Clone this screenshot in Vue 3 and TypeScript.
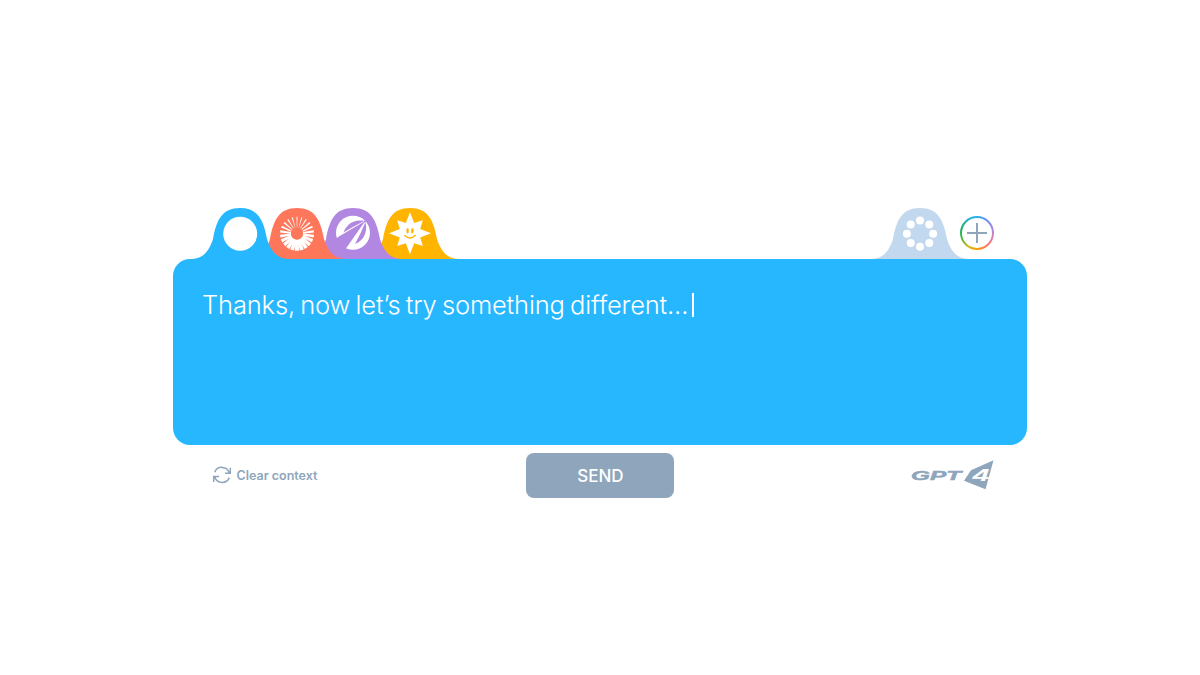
<script setup lang="ts">
interface Tab {
  name: string
  color: string
}

const tabs: Tab[] = [
  { name: 'blank', color: '#26b7ff' },
  { name: 'burst', color: '#ff775b' },
  { name: 'blades', color: '#b287e2' },
  { name: 'sunny', color: '#ffb400' },
]

const tabShape = 'M4 51C15 50.500 21 43.500 25 31C28.500 12 34 0 52 0S75.500 12 79 31C83 43.500 89 50.500 100 51Z'

const rays = Array.from({ length: 22 }, (_, i) => {
  const angle = (i * 360) / 22
  const low = (1 - Math.cos((angle * Math.PI) / 180)) / 2
  const outer = 0.5 + low * 1.5
  const inner = 0.15 + low * 1.5
  return { angle, points: `${17 - outer},0 ${17 + outer},0 ${17 + inner},11 ${17 - inner},11` }
})

const dots = Array.from({ length: 8 }, (_, i) => {
  const a = (i * Math.PI) / 4
  return { x: 17 + 13.1 * Math.cos(a), y: 17 + 13.1 * Math.sin(a) }
})

const star = Array.from({ length: 16 }, (_, i) => {
  const a = (i * Math.PI) / 8
  const r = i % 2 ? 11 : i % 4 === 0 ? 21 : 18.2
  return `${(21 + r * Math.sin(a)).toFixed(2)},${(21 - r * Math.cos(a)).toFixed(2)}`
}).join(' ')
</script>

<template>
  <main class="page">
    <section class="composer">
      <header class="tabs">
        <div class="group">
          <button v-for="tab in tabs" :key="tab.name" class="tab" :class="tab.name" :aria-label="tab.name">
            <svg width="104" height="52" viewBox="0 0 104 52">
              <path :d="tabShape" :fill="tab.color" />
              <circle v-if="tab.name === 'blank'" cx="52.200" cy="25.700" r="17" fill="#fff" />
              <g v-else-if="tab.name === 'burst'" transform="translate(35 8.700)">
                <polygon
                  v-for="ray in rays"
                  :key="ray.angle"
                  :points="ray.points"
                  :transform="`rotate(${ray.angle} 17 17)`"
                  fill="#fff"
                />
                <path d="M9.500 19A7.800 7.800 0 0 0 24.500 19L24 25Q17 32 10 25Z" fill="#fff" />
                <circle cx="17" cy="16.600" r="6" :fill="tab.color" />
              </g>
              <g v-else-if="tab.name === 'blades'" transform="translate(35 7.800)">
                <circle cx="17" cy="17" r="17" fill="#fff" />
                <path d="M29.200 5.200L2.500 21L-2 25L8 36L10.300 32.200Z" :fill="tab.color" />
                <path d="M28.500 5Q18 3.500 12.300 9.200Q8.500 13 7.500 16.800Q17 11 28.500 5Z" :fill="tab.color" />
                <path d="M29.400 6.200Q31.600 14 27.500 21.500Q24.500 26.300 19 28.200Q25 17.500 29.400 6.200Z" :fill="tab.color" />
                <path d="M28 6.400L31 3.400" :stroke="tab.color" stroke-width="1.300" />
              </g>
              <g v-else transform="translate(31 4.200)">
                <polygon :points="star" fill="#fff" />
                <ellipse cx="18.600" cy="18.600" rx="1.250" ry="2.700" :fill="tab.color" />
                <ellipse cx="23.400" cy="18.600" rx="1.250" ry="2.700" :fill="tab.color" />
                <path d="M15.800 23.200Q21 28.200 26.200 23.200" fill="none" :stroke="tab.color" stroke-width="1.400" stroke-linecap="round" />
              </g>
            </svg>
          </button>
        </div>
        <div class="group actions">
          <button class="tab" aria-label="circle">
            <svg width="104" height="52" viewBox="0 0 104 52">
              <path :d="tabShape" fill="#c2d8ee" />
              <g transform="translate(35 8.700)">
                <circle v-for="(dot, i) in dots" :key="i" :cx="dot.x" :cy="dot.y" r="4" fill="#fff" />
              </g>
            </svg>
          </button>
          <button class="add" aria-label="Add">
            <svg width="34" height="34" viewBox="0 0 34 34">
              <path d="M17 7V27M7 17H27" stroke="#8ea5bb" stroke-width="2" />
            </svg>
          </button>
        </div>
      </header>

      <div class="panel">
        <p class="message">Thanks, now let’s try something different...<span class="caret"></span></p>
      </div>

      <footer class="footer">
        <button class="clear">
          <svg width="20" height="18" viewBox="0 0 20 18" fill="none" stroke="#8ea5bb" stroke-width="1.500">
            <path d="M2.700 6.200A7.700 7.700 0 0 1 17.200 6.800M18.300 1.800V7.200H12.900" />
            <path d="M17.300 11.600A7.700 7.700 0 0 1 2.800 11M1.700 16V10.600H7.100" />
          </svg>
          <span>Clear context</span>
        </button>
        <button class="send">SEND</button>
        <svg class="model" width="84" height="32" viewBox="0 0 84 32" aria-label="GPT4">
          <text class="mark" x="1" y="21" textLength="50" lengthAdjust="spacingAndGlyphs">GPT</text>
          <path d="M83.500 1.300L75.500 30.300L54 21.800L61 11.300Z" fill="#8ea5bb" />
          <text class="four" x="62.500" y="21.800" textLength="17" lengthAdjust="spacingAndGlyphs">4</text>
        </svg>
      </footer>
    </section>
  </main>
</template>

<style>
body {
  margin: 0;
  background: #fff;
}
</style>

<style scoped>
.page {
  box-sizing: border-box;
  width: 1200px;
  height: 675px;
  padding: 208px 173px 0;
  background: #fff;
  font-family: Inter, 'Liberation Sans', sans-serif;
}
button {
  padding: 0;
  border: 0;
  background: none;
  font: inherit;
}
.tabs {
  display: flex;
  justify-content: space-between;
  height: 50.700px;
  padding: 0 33.500px 0 15.300px;
}
.group {
  display: flex;
  isolation: isolate;
}
.tab {
  display: block;
  width: 104px;
  height: 52px;
  margin-right: -47.600px;
}
.tab svg {
  display: block;
}
.blank {
  position: relative;
  z-index: 4;
}
.burst {
  position: relative;
  z-index: 3;
}
.blades {
  position: relative;
  z-index: 2;
}
.sunny {
  position: relative;
  z-index: 1;
}
.actions .tab {
  margin-right: -12.500px;
}
.add {
  display: flex;
  align-items: center;
  justify-content: center;
  box-sizing: border-box;
  width: 34px;
  height: 34px;
  margin-top: 8px;
  border: 2px solid transparent;
  border-radius: 50%;
  background:
    linear-gradient(#fff, #fff) padding-box,
    conic-gradient(#27aef5, #7b8cf0 45deg, #b287e2 80deg, #e779a0 115deg, #ff775b 145deg, #ffa000 180deg, #d0b51c 215deg, #40b846 255deg, #1dad69 285deg, #20b2c5 325deg, #27aef5) border-box;
}
.add svg {
  flex: none;
}
.panel {
  position: relative;
  z-index: 5;
  box-sizing: border-box;
  height: 186px;
  padding: 29px 29px;
  border-radius: 17px;
  background: #26b7ff;
}
.message {
  display: flex;
  align-items: center;
  margin: 0;
  color: #fff;
  font-size: 25.500px;
  font-weight: 300;
  letter-spacing: -0.160px;
  word-spacing: -1.700px;
  line-height: 34px;
  white-space: nowrap;
}
.caret {
  width: 2px;
  height: 24px;
  margin-left: 3.500px;
  background: #fff;
}
.footer {
  display: grid;
  grid-template-columns: 1fr 148px 1fr;
  align-items: center;
  height: 45px;
  margin-top: 8.300px;
  padding: 0 33px 0 39px;
  color: #8ea5bb;
}
.clear {
  display: flex;
  align-items: center;
  gap: 4.500px;
  color: #8ea5bb;
  font-size: 12.500px;
  font-weight: 600;
  white-space: nowrap;
}
.send {
  height: 45px;
  margin-left: -2.600px;
  margin-right: 2.600px;
  padding-top: 1px;
  border-radius: 8px;
  background: #8ea5bb;
  color: #fff;
  font-size: 17px;
  font-weight: 500;
}
.model {
  justify-self: end;
}
.mark,
.four {
  font-family: 'Liberation Sans', Arial, sans-serif;
  font-style: italic;
  font-weight: 700;
  fill: #8ea5bb;
  font-size: 13px;
}
.mark {
  stroke: #8ea5bb;
  stroke-width: 0.500px;
}
.four {
  fill: #fff;
  font-size: 16px;
}
</style>
